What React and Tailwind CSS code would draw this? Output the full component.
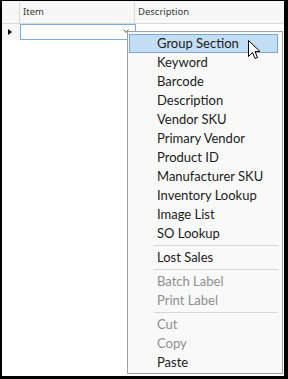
import React from "react";

const items = [
  { t: "Group Section", hl: true },
  { t: "Keyword" },
  { t: "Barcode" },
  { t: "Description" },
  { t: "Vendor SKU" },
  { t: "Primary Vendor" },
  { t: "Product ID" },
  { t: "Manufacturer SKU" },
  { t: "Inventory Lookup" },
  { t: "Image List" },
  { t: "SO Lookup" },
  { sep: true },
  { t: "Lost Sales" },
  { sep: true },
  { t: "Batch Label", dis: true },
  { t: "Print Label", dis: true },
  { sep: true },
  { t: "Cut", dis: true },
  { t: "Copy", dis: true },
  { t: "Paste" },
];

function Cursor() {
  return (
    <svg
      className="absolute left-[246px] top-[39px]"
      width="13"
      height="20"
      viewBox="0 0 13 20"
    >
      <path
        d="M0.5 0.5 L0.5 16.5 L4.5 12.5 L7 18.5 L9.5 17.5 L7 11.5 L12 11.5 Z"
        fill="#ffffff"
        stroke="#000000"
        strokeWidth="1"
        strokeLinejoin="miter"
      />
    </svg>
  );
}

export default function App() {
  return (
    <div
      className="w-[288px] h-[379px] bg-white border-black border-l-2 border-t border-r-[4px] border-b-[3px] box-border overflow-hidden"
      style={{ fontFamily: '"Noto Sans", "Open Sans", sans-serif' }}
    >
      <div className="relative w-full h-full bg-white">
        {/* header row */}
        <div className="flex h-[23px] bg-[#f7f7f7] border-b border-[#d9d9d9]">
          <div className="w-[18px] border-r border-[#d9d9d9]" />
          <div className="w-[115px] border-r border-[#d9d9d9] pl-[3px] pt-[5px] text-[9.5px] leading-[12px] text-[#3a3a3a]">
            Item
          </div>
          <div className="flex-1 pl-[3px] pt-[5px] text-[9.5px] leading-[12px] text-[#3a3a3a]">
            Description
          </div>
        </div>
        {/* row 1 */}
        <div className="flex h-[16px]">
          <div className="w-[18px] flex items-center pl-[6px] bg-[#f7f7f7]">
            <div className="w-0 h-0 border-y-[3.5px] border-y-transparent border-l-[4px] border-l-black" />
          </div>
          <div className="w-[116px] border border-[#7aaee6] relative bg-white">
            <svg
              className="absolute left-[102px] top-[4px]"
              width="6"
              height="5"
              viewBox="0 0 6 5"
            >
              <path d="M0.5 0.5 L3 3.5 L5.5 0.5" fill="none" stroke="#6b6b6b" strokeWidth="1" />
            </svg>
          </div>
        </div>
        {/* context menu */}
        <div
          className="absolute left-[125px] top-[30px] w-[156px] h-[343px] bg-[#f9f9f9] border border-[#a0a0a0] pt-[2px] pl-px pr-[4px] flex flex-col"
          style={{ fontFamily: 'Lato, "Noto Sans", sans-serif' }}
        >
          {items.map((it, i) =>
            it.sep ? (
              <div key={i} className="h-[5px] flex items-center pl-[25px]">
                <div className="h-px w-full bg-[#d7d7d7]" />
              </div>
            ) : (
              <div
                key={i}
                className={
                  "h-[19px] flex items-center pl-[27px] text-[13px] leading-none " +
                  (it.hl
                    ? "bg-[#c3ddf5] border border-[#7ba9dc] "
                    : "border border-transparent ") +
                  (it.dis ? "text-[#8f8f8f]" : "text-[#1b1b1b]")
                }
              >
                {it.t}
              </div>
            )
          )}
        </div>
        <Cursor />
      </div>
    </div>
  );
}
